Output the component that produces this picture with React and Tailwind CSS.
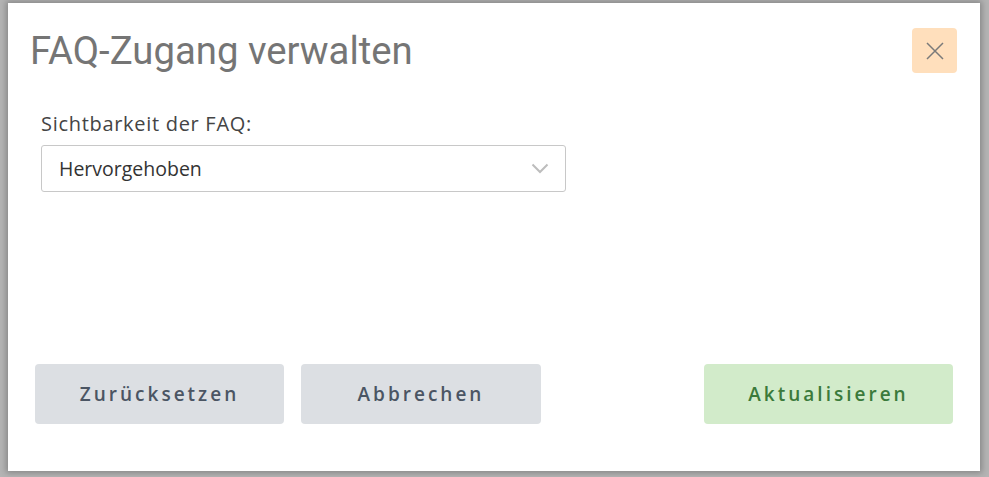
import React from "react";

export default function App() {
  return (
    <div className="w-[989px] h-[477px] bg-[#b4b4b4] pt-[3px] pl-[8px] pr-[9px] pb-[6px] overflow-hidden" style={{ fontFamily: "'Open Sans', sans-serif" }}>
      <div className="w-full h-full bg-white flex flex-col shadow-[0_0_6px_2px_rgba(0,0,0,0.25)]">
        <div className="flex items-start justify-between pl-[22px] pr-[23px] pt-[25px]">
          <h1 className="text-[38.3px] leading-[44px] text-[#757575] tracking-[0px] mt-[1px]" style={{ fontFamily: "Roboto, sans-serif" }}>
            FAQ-Zugang verwalten
          </h1>
          <button className="w-[45px] h-[45px] rounded-[4px] bg-[#ffdfbc] flex items-center justify-center">
            <svg width="20" height="20" viewBox="0 0 20 20" fill="none" stroke="#7a7a7a" strokeWidth="1.5">
              <path d="M2 2 L18 18 M18 2 L2 18" />
            </svg>
          </button>
        </div>
        <div className="pl-[33px] pt-[38px]">
          <label className="block text-[20px] leading-[26px] text-[#444] tracking-[0.7px]">Sichtbarkeit der FAQ:</label>
          <div className="mt-[8px] w-[525px] h-[47px] border border-[#c8c8c8] rounded-[3px] flex items-center justify-between pl-[17px] pr-[16px]">
            <span className="text-[19.5px] text-[#333]">Hervorgehoben</span>
            <svg width="18" height="11" viewBox="0 0 18 11" fill="none" stroke="#bdbdbd" strokeWidth="2">
              <path d="M1.5 1.5 L9 9 L16.5 1.5" />
            </svg>
          </div>
        </div>
        <div className="flex-1" />
        <div className="flex items-center justify-between pl-[27px] pr-[27px] pb-[47px]">
          <div className="flex gap-[17px]">
            <button className="w-[249px] h-[60px] rounded-[4px] bg-[#dcdfe3] text-[#4b5563] text-[19px] font-semibold tracking-[3px]">Zurücksetzen</button>
            <button className="w-[240px] h-[60px] rounded-[4px] bg-[#dcdfe3] text-[#4b5563] text-[19px] font-semibold tracking-[3px]">Abbrechen</button>
          </div>
          <button className="w-[249px] h-[60px] rounded-[4px] bg-[#d2ebca] text-[#3b7a3b] text-[19px] font-semibold tracking-[3px]">Aktualisieren</button>
        </div>
      </div>
    </div>
  );
}
